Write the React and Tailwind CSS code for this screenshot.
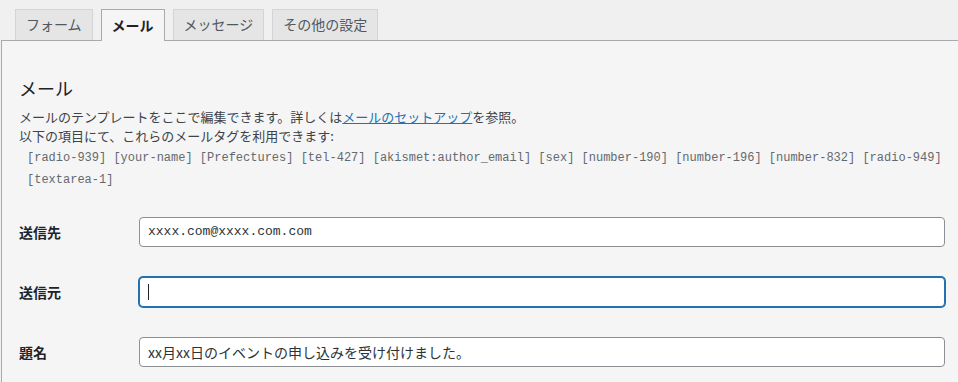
export default function App() {
  const jp = { fontFamily: '"Noto Sans CJK JP", "Noto Sans", sans-serif' };
  const mono = { fontFamily: '"Liberation Mono", "DejaVu Sans Mono", monospace' };
  const tags = ["[radio-939]", "[your-name]", "[Prefectures]", "[tel-427]", "[akismet:author_email]", "[sex]", "[number-190]", "[number-196]", "[number-832]", "[radio-949]", "[textarea-1]"];
  return (
    <div className="min-h-[382px] bg-[#f0f0f1] pt-[9px] text-[#3c434a]" style={jp}>
      <div className="flex items-start gap-2 pl-[15px]">
        <div className="h-[31px] border border-b-0 border-[#d4d4d4] bg-[#e5e5e5] px-[10px] text-[14px] leading-[29px] text-[#50575e]">フォーム</div>
        <div className="relative z-10 -mb-px h-[32px] border border-b-0 border-[#a7aaad] bg-[#f5f5f5] px-[10px] text-[14px] font-bold leading-[30px] text-[#1d2327]">メール</div>
        <div className="h-[31px] border border-b-0 border-[#d4d4d4] bg-[#e5e5e5] px-[10px] text-[14px] leading-[29px] text-[#50575e]">メッセージ</div>
        <div className="h-[31px] border border-b-0 border-[#d4d4d4] bg-[#e5e5e5] px-[10px] text-[14px] leading-[29px] text-[#50575e]">その他の設定</div>
      </div>
      <div className="ml-px min-h-[342px] border-l border-t border-[#a7aaad] bg-[#f5f5f5] pl-[17px] pr-[13px] pt-[35px]">
        <h2 className="text-[18px] leading-[24px] text-[#1d2327]">メール</h2>
        <div className="mt-[7px] text-[13px] leading-[19px]">
          <p>メールのテンプレートをここで編集できます。詳しくは<a className="text-[#2271b1] underline">メールのセットアップ</a>を参照。</p>
          <p>以下の項目にて、これらのメールタグを利用できます:</p>
        </div>
        <p className="mt-[2px] pl-[8px] text-[12px] leading-[22px] text-[#646970]" style={mono}>
          {tags.map((t, i) => (
            <span key={t}>
              <span className="whitespace-nowrap">{t}</span>
              {i < tags.length - 1 ? " " : ""}
            </span>
          ))}
        </p>
        <div className="mt-[11px]">
          <div className="flex items-center py-[15px]">
            <div className="w-[120px] shrink-0 text-[14px] font-bold text-[#1d2327]">送信先</div>
            <div className="flex h-[30px] flex-1 items-center rounded-[4px] border border-[#8c8f94] bg-white px-[8px] text-[13px] text-[#2c3338]" style={mono}>xxxx.com@xxxx.com.com</div>
          </div>
          <div className="flex items-center py-[15px]">
            <div className="w-[120px] shrink-0 text-[14px] font-bold text-[#1d2327]">送信元</div>
            <div className="flex h-[30px] flex-1 items-center rounded-[4px] border border-[#2271b1] bg-white px-[8px] shadow-[0_0_0_1px_#2271b1]">
              <span className="h-[16px] w-px bg-[#1d2327]" />
            </div>
          </div>
          <div className="flex items-center py-[15px]">
            <div className="w-[120px] shrink-0 text-[14px] font-bold text-[#1d2327]">題名</div>
            <div className="flex h-[30px] flex-1 items-center rounded-[4px] border border-[#8c8f94] bg-white px-[8px] text-[14px] text-[#2c3338]">xx月xx日のイベントの申し込みを受け付けました。</div>
          </div>
        </div>
      </div>
    </div>
  );
}
